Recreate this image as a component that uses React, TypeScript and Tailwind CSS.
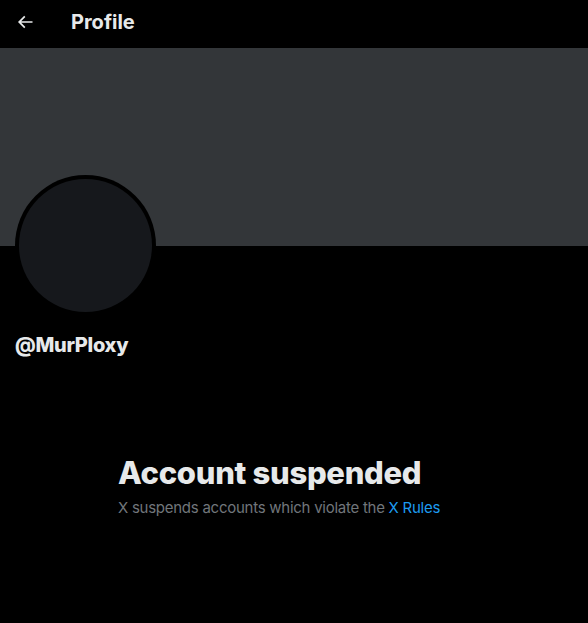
import React from "react";

export default function App() {
  return (
    <div className="w-[588px] h-[623px] bg-black text-[#e7e9ea] overflow-hidden" style={{ fontFamily: "Inter, 'Liberation Sans', sans-serif" }}>
      <div className="h-[48px] flex items-center px-4 pb-[4px]">
        <svg viewBox="0 0 24 24" className="w-5 h-5 ml-[-1px]" fill="#e7e9ea">
          <path d="M7.414 13l5.043 5.04-1.414 1.42L3.586 12l7.457-7.46 1.414 1.42L7.414 11H21v2H7.414z" />
        </svg>
        <div className="ml-[36px] text-[20px] font-bold leading-6">Profile</div>
      </div>
      <div className="h-[198px] bg-[#333639]" />
      <div className="px-[15px]">
        <div className="mt-[-71px] w-[141px] h-[141px] rounded-full bg-black p-[4px]">
          <div className="w-full h-full rounded-full bg-[#16181c]" />
        </div>
        <div className="mt-[17px] text-[20px] font-extrabold leading-6 tracking-[-0.3px]">@MurPloxy</div>
      </div>
      <div className="ml-[118px] mt-[98px]">
        <div className="text-[31px] font-extrabold leading-9 tracking-[-0.3px]">Account suspended</div>
        <div className="mt-[7px] text-[15px] leading-5 tracking-[-0.26px] text-[#71767b]">
          X suspends accounts which violate the <span className="text-[#1d9bf0]">X Rules</span>
        </div>
      </div>
    </div>
  );
}
